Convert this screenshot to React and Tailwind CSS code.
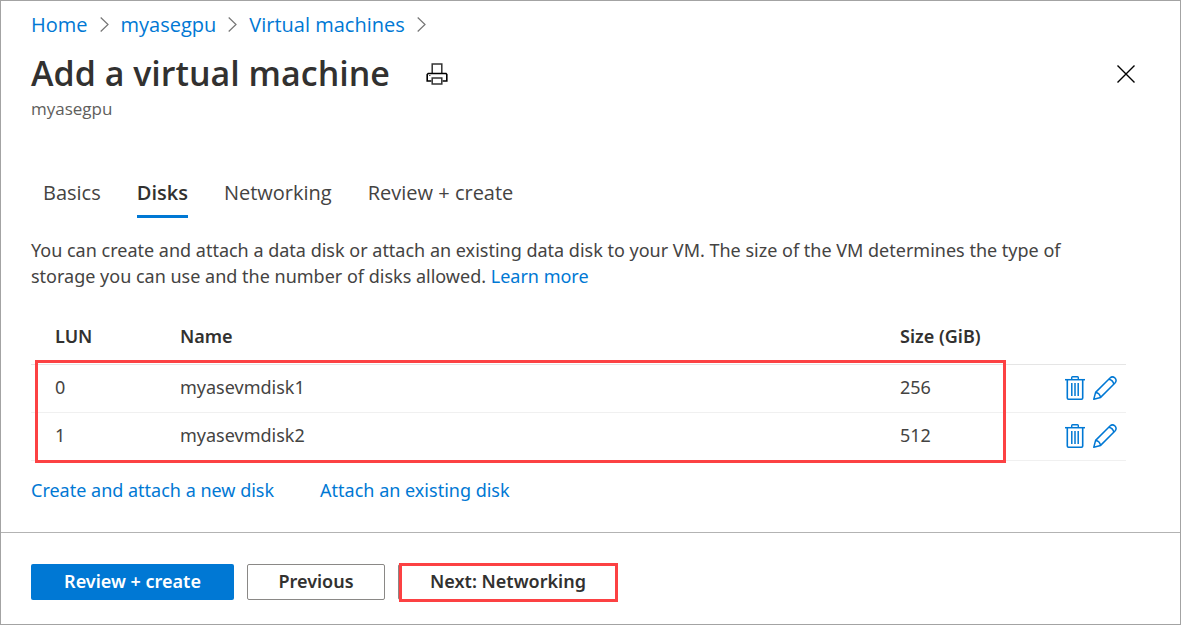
const tabs = ["Basics", "Disks", "Networking", "Review + create"];

const disks = [
  { lun: 0, name: "myasevmdisk1", size: 256 },
  { lun: 1, name: "myasevmdisk2", size: 512 },
];

const crumbs = ["Home", "myasegpu", "Virtual machines"];

function ChevronIcon() {
  return (
    <svg width="9" height="16" viewBox="0 0 9 16" fill="none" stroke="#767676" strokeWidth="1.2" aria-hidden="true">
      <path d="M0.7 0.5 L8 7.5 L0.7 14.5" />
    </svg>
  );
}

function PrinterIcon() {
  return (
    <svg width="22" height="22" viewBox="0 0 22 22" fill="none" aria-hidden="true">
      <path d="M6.2 10V1H15.8V10" stroke="#333" strokeWidth="1.5" />
      <path d="M5.5 18H1.2V11.5L2.2 10.5H20L20.8 11.5V18H16.5" stroke="#000" strokeWidth="1.6" />
      <path d="M6.2 15H15.8V21H6.2Z" fill="#fff" stroke="#333" strokeWidth="1.5" />
      <path d="M3 12.5H4.5" stroke="#555" strokeWidth="1.2" />
    </svg>
  );
}

function CloseIcon() {
  return (
    <svg width="18" height="18" viewBox="0 0 18 18" fill="none" stroke="#000" strokeWidth="1.4" aria-hidden="true">
      <path d="M0.5 0.5L17.5 17.5M17.5 0.5L0.5 17.5" />
    </svg>
  );
}

function TrashIcon() {
  return (
    <svg width="20" height="24" viewBox="0 0 20 24" fill="none" stroke="#0078d4" aria-hidden="true">
      <path d="M0 3.7H20" strokeWidth="1.5" />
      <path d="M6.7 3.5V1.6Q6.7 0.8 7.5 0.8H12.5Q13.3 0.8 13.3 1.6V3.5" strokeWidth="1.4" />
      <path d="M2.3 4V22Q2.3 23.2 3.5 23.2H16.5Q17.7 23.2 17.7 22V4" strokeWidth="1.6" />
      <path d="M6.8 7V20M10 7V20M13.2 7V20" strokeWidth="1.5" />
    </svg>
  );
}

function PencilIcon() {
  return (
    <svg width="24" height="24" viewBox="0 0 24 24" fill="none" stroke="#0078d4" strokeWidth="1.5" strokeLinejoin="round" aria-hidden="true">
      <path d="M0.8 23.2L2.6 16.4L17 2Q19.4 -0.2 22 2Q24.2 4.6 22 7L7.6 21.4Z" />
      <path d="M2.6 16.4Q6.8 17 7.6 21.4M15.8 3.2Q20 4 20.8 8.2" />
    </svg>
  );
}

export default function App() {
  return (
    <div className="flex min-h-screen flex-col border border-[#a3a3a3] bg-white font-['Noto_Sans','Open_Sans',sans-serif] text-[18px] leading-[26px] text-[#444342]">
      <header className="px-[30px] pt-[10px] font-['Open_Sans','Noto_Sans',sans-serif]">
        <nav aria-label="Breadcrumb">
          <ol className="flex items-center text-[20px] leading-[28px]">
            {crumbs.map((crumb) => (
              <li key={crumb} className="flex items-center">
                <a href="#" className="text-[#0078d4]">{crumb}</a>
                <span className="px-3"><ChevronIcon /></span>
              </li>
            ))}
          </ol>
        </nav>
        <div className="mt-3 flex items-center pr-[15px]">
          <h1 className="pb-0.5 text-[34px] leading-[44px] font-semibold text-[#323130]">Add a virtual machine</h1>
          <button type="button" aria-label="Print" className="ml-9"><PrinterIcon /></button>
          <button type="button" aria-label="Close" className="ml-auto"><CloseIcon /></button>
        </div>
        <p className="text-[17px] leading-[24px] text-[#605e5c]">myasegpu</p>
      </header>

      <main className="flex-1 px-[30px] pt-[58px]">
        <div role="tablist" className="flex gap-9 pl-3 font-['Open_Sans','Noto_Sans',sans-serif] text-[20px] leading-[28px]">
          {tabs.map((tab) => (
            <button
              key={tab}
              type="button"
              role="tab"
              aria-selected={tab === "Disks"}
              className={
                tab === "Disks"
                  ? "border-b-3 border-[#0078d4] pb-2 font-semibold text-[#323130]"
                  : "border-b-3 border-transparent pb-2"
              }
            >
              {tab}
            </button>
          ))}
        </div>

        <p className="mt-[19px] max-w-[1080px]">
          You can create and attach a data disk or attach an existing data disk to your VM. The size of the VM determines the type of storage you can use and the number of disks allowed.{" "}
          <a href="#" className="text-[#0078d4]">Learn more</a>
        </p>

        <div className="relative mt-[21px] mr-6">
          <table className="w-full table-fixed text-left">
            <thead>
              <tr className="h-[54px] border-b border-[#e5e5e5] text-[#323130]">
                <th className="w-[149px] pb-0.5 pl-6 font-semibold">LUN</th>
                <th className="pb-0.5 font-semibold">Name</th>
                <th className="w-[165px] pb-0.5 font-semibold">Size (GiB)</th>
                <th className="w-[61px]" aria-label="Actions"></th>
              </tr>
            </thead>
            <tbody>
              {disks.map((disk) => (
                <tr key={disk.lun} className="h-[48px] border-b border-[#f0f0f0]">
                  <td className="pb-0.5 pl-6">{disk.lun}</td>
                  <td className="pb-0.5">{disk.name}</td>
                  <td className="pb-0.5">{disk.size}</td>
                  <td>
                    <div className="flex gap-2">
                      <button type="button" aria-label={`Delete ${disk.name}`}><TrashIcon /></button>
                      <button type="button" aria-label={`Edit ${disk.name}`}><PencilIcon /></button>
                    </div>
                  </td>
                </tr>
              ))}
            </tbody>
          </table>
          <div className="pointer-events-none absolute top-[50px] right-[120px] -bottom-[2px] left-1 border-3 border-[#fc4143]" />
        </div>

        <div className="mt-4 flex gap-[46px] text-[#0078d4]">
          <a href="#">Create and attach a new disk</a>
          <a href="#">Attach an existing disk</a>
        </div>
      </main>

      <footer className="mt-[29px] flex gap-[13px] border-t border-[#b3b3b3] px-[30px] pt-[31px] pb-6 font-semibold">
        <button type="button" className="h-9 w-[203px] rounded-xs bg-[#0078d4] pb-0.5 text-white">Review + create</button>
        <button type="button" className="h-9 w-[138px] rounded-xs border border-[#8a8886] pb-0.5 text-[#323130]">Previous</button>
        <div className="relative">
          <button type="button" className="h-9 w-[220px] rounded-xs border border-[#8a8886] pb-0.5 text-[#323130]">Next: Networking</button>
          <div className="pointer-events-none absolute -top-px right-0 -bottom-[2px] left-px border-3 border-[#fc4143]" />
        </div>
      </footer>
    </div>
  );
}
